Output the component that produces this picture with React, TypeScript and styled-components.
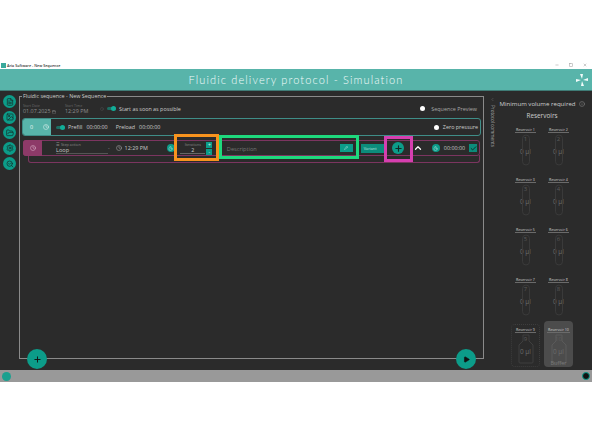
import React from 'react'
import styled, { createGlobalStyle } from 'styled-components'
import {
  Calendar,
  Check,
  ChevronLeft,
  ChevronUp,
  Clock,
  FileText,
  FolderOpen,
  Image,
  Info,
  Minus,
  Pencil,
  Play,
  Plus,
  SearchCheck,
  Settings,
  Square,
  Timer,
  X,
} from 'lucide-react'

const GlobalStyle = createGlobalStyle`
  html, body { margin: 0; padding: 0; background: #fff; }
  * { box-sizing: border-box; }
  body { font-family: "Open Sans", "Liberation Sans", sans-serif; }
`

const Page = styled.div`
  width: 592px;
  height: 444px;
  padding: 59px 0 62px;
  display: flex;
  flex-direction: column;
  overflow: hidden;
`
const TitleBar = styled.div`
  height: 10px;
  display: flex;
  align-items: center;
  padding: 2px 5px 0 1px;
  gap: 1px;
  color: #333;
  font-size: 3.7px;
  font-weight: 600;
`
const AppLogo = styled.div`
  width: 5px;
  height: 5px;
  background: #3aa99c;
`
const WindowButtons = styled.div`
  margin-left: auto;
  display: flex;
  gap: 10px;
  color: #666;
`
const Header = styled.header`
  height: 22px;
  background: #58b4aa;
  border-bottom: 1px solid #3f7c76;
  display: flex;
  align-items: center;
  justify-content: center;
  position: relative;
  color: #f2fbfa;
  font-family: Lato, sans-serif;
  font-weight: 300;
  font-size: 11px;
  letter-spacing: 1.13px;
`
const HeaderLogo = styled.svg`
  position: absolute;
  right: 3px;
  top: 4px;
`
const Body = styled.div`
  flex: 1;
  min-height: 0;
  display: flex;
  background: #2b2b2b;
`
const Rail = styled.nav`
  width: 19px;
  padding-top: 4px;
  display: flex;
  flex-direction: column;
  align-items: center;
  gap: 2.6px;
`
const RailButton = styled.div`
  width: 13px;
  height: 13px;
  border-radius: 50%;
  background: #0c9c89;
  color: #15302c;
  display: flex;
  align-items: center;
  justify-content: center;
`
const Panel = styled.fieldset`
  width: 465px;
  height: 267px;
  margin: 1px 0 0;
  padding: 0 2px 0 2px;
  border: 1.3px solid #8a8a8a;
  min-width: 0;
  position: relative;
  display: flex;
  flex-direction: column;
`
const Legend = styled.legend`
  margin-left: 0;
  padding: 0 1px;
  color: #cfcfcf;
  font-size: 5.4px;
  line-height: 8px;
`
const StartRow = styled.div`
  height: 17px;
  display: flex;
  align-items: center;
  padding: 0 4px 0 1px;
`
const Stamp = styled.div<{ $width: number }>`
  width: ${p => p.$width}px;
  display: flex;
  flex-direction: column;
  color: #8f8f8f;
  font-size: 5.4px;
  line-height: 6px;
  small {
    font-size: 3.6px;
    line-height: 4px;
    color: #6a6a6a;
  }
  svg { display: inline; vertical-align: -1px; margin-left: 1px; }
`
const Label = styled.span<{ $gap?: number; $color?: string }>`
  margin-left: ${p => p.$gap ?? 0}px;
  color: ${p => p.$color ?? '#cdcdcd'};
  font-size: 5.4px;
  white-space: nowrap;
`
const Toggle = styled.div<{ $gap?: number }>`
  margin-left: ${p => p.$gap ?? 0}px;
  width: 9px;
  height: 3px;
  border-radius: 2px;
  background: #1c6e63;
  position: relative;
  flex: none;
  &::after {
    content: '';
    position: absolute;
    right: 0;
    top: -1px;
    width: 5px;
    height: 5px;
    border-radius: 50%;
    background: #12ad98;
  }
`
const Dot = styled.div`
  width: 5px;
  height: 5px;
  border-radius: 50%;
  background: #fff;
  margin-left: auto;
  flex: none;
`
const PrefillRow = styled.div`
  height: 18px;
  margin-top: 1px;
  border: 1px solid #3f8e88;
  border-radius: 3px;
  display: flex;
  align-items: center;
  padding-right: 2px;
`
const PrefillTag = styled.div`
  width: 28px;
  height: 100%;
  background: #58b4aa;
  border-radius: 2px 0 0 2px;
  display: flex;
  align-items: center;
  justify-content: space-between;
  padding: 0 2px 0 7px;
  color: #eaf7f5;
  font-size: 5.4px;
`
const StepGroup = styled.div`
  margin: 4px 1px 0 1px;
  position: relative;
`
const StepRow = styled.div`
  height: 16px;
  border: 1px solid #7c3560;
  border-radius: 3px;
  display: flex;
  align-items: center;
  position: relative;
`
const StepTail = styled.div`
  height: 8px;
  margin: -1px 0 0 5px;
  border: 1px solid #7c3560;
  border-top: 0;
  border-radius: 0 0 3px 3px;
`
const StepTag = styled.div`
  width: 19px;
  height: 16px;
  margin: -1px 0 -1px -1px;
  background: #8d3a68;
  border-radius: 3px 0 0 3px;
  display: flex;
  align-items: center;
  justify-content: center;
  color: #e3bdd2;
`
const ActionField = styled.div`
  margin-left: 14px;
  width: 52px;
  border-bottom: 1px solid #555;
  display: flex;
  flex-direction: column;
  color: #c8c8c8;
  font-size: 5.6px;
  line-height: 6px;
  small {
    font-size: 3.8px;
    line-height: 4px;
    color: #8a8a8a;
  }
`
const Dash = styled.span`
  color: #999;
  font-size: 5px;
`
const IconSlot = styled.span<{ $gap?: number }>`
  margin-left: ${p => p.$gap ?? 0}px;
  display: flex;
  color: #aaa;
  flex: none;
`
const TealCircle = styled.div<{ $gap?: number; $size?: number }>`
  margin-left: ${p => p.$gap ?? 0}px;
  width: ${p => p.$size ?? 8}px;
  height: ${p => p.$size ?? 8}px;
  border-radius: 50%;
  background: #0c9c89;
  color: #cdeee9;
  display: flex;
  align-items: center;
  justify-content: center;
  flex: none;
`
const Annotated = styled.div<{ $gap?: number; $width: number }>`
  margin-left: ${p => p.$gap ?? 0}px;
  width: ${p => p.$width}px;
  flex: none;
  position: relative;
  display: flex;
  align-items: center;
  justify-content: center;
`
const Highlight = styled.div<{ $color: string; $top: number; $bottom: number }>`
  position: absolute;
  top: ${p => p.$top}px;
  bottom: ${p => p.$bottom}px;
  left: 0;
  right: 0;
  border: 3.5px solid ${p => p.$color};
  pointer-events: none;
`
const IterationsBody = styled.div`
  width: 32px;
  height: 14px;
  display: flex;
  align-items: center;
  gap: 1px;
`
const IterationsField = styled.div`
  flex: 1;
  border-bottom: 1px solid #666;
  text-align: center;
  color: #d0d0d0;
  font-size: 5.4px;
  line-height: 6px;
  small {
    display: block;
    font-size: 3.6px;
    line-height: 5px;
    color: #8a8a8a;
  }
`
const Stepper = styled.div`
  display: flex;
  flex-direction: column;
  gap: 1px;
`
const StepperButton = styled.div`
  width: 6px;
  height: 6px;
  background: #0c9c89;
  color: #d8f3ef;
  font-size: 5px;
  line-height: 6px;
  text-align: center;
`
const DescriptionBody = styled.div`
  width: 100%;
  padding: 1px 6px 0 8px;
  display: flex;
  align-items: center;
  justify-content: space-between;
  color: #767676;
  font-size: 5.6px;
`
const EditButton = styled.div`
  width: 13px;
  height: 8px;
  margin-top: -1px;
  background: #0c9c89;
  color: #e6f8f5;
  display: flex;
  align-items: center;
  justify-content: center;
`
const VariantButton = styled.div`
  margin-left: 2px;
  width: 23px;
  height: 9px;
  background: #0c8c7b;
  color: #bfe6e0;
  font-size: 3.8px;
  line-height: 9px;
  padding-left: 3px;
  flex: none;
`
const Time = styled.span<{ $gap?: number }>`
  margin-left: ${p => p.$gap ?? 0}px;
  color: #c8c8c8;
  font-size: 5.4px;
`
const CheckBox = styled.div`
  margin-left: 4px;
  width: 8px;
  height: 8px;
  background: #0c8c7b;
  color: #0d2a26;
  display: flex;
  align-items: center;
  justify-content: center;
  flex: none;
`
const FabRow = styled.div`
  position: absolute;
  left: 7px;
  right: 7px;
  bottom: -11px;
  display: flex;
  justify-content: space-between;
`
const Fab = styled.div`
  width: 20px;
  height: 20px;
  border-radius: 50%;
  background: #0c9c89;
  color: #111;
  display: flex;
  align-items: center;
  justify-content: center;
`
const CommentsTab = styled.aside`
  width: 14px;
  padding: 6px 0 0 3px;
  display: flex;
  flex-direction: column;
  align-items: center;
  color: #777;
  gap: 3px;
`
const VerticalText = styled.span`
  writing-mode: vertical-rl;
  color: #aaa;
  font-size: 4.6px;
  white-space: nowrap;
`
const Reservoirs = styled.aside`
  flex: 1;
  padding: 8px 6px 0 0;
  display: flex;
  flex-direction: column;
  align-items: center;
`
const MinTitle = styled.div`
  display: flex;
  align-items: center;
  gap: 3px;
  white-space: nowrap;
  color: #cdcdcd;
  font-size: 6.1px;
  line-height: 9px;
  svg { color: #888; flex: none; }
`
const ReservoirsTitle = styled.div`
  margin-top: 3px;
  color: #cdcdcd;
  font-size: 6.4px;
  line-height: 9px;
`
const ReservoirGrid = styled.div`
  margin-top: 6px;
  display: grid;
  grid-template-columns: 33px 33px;
  grid-auto-rows: 50px;
`
const Reservoir = styled.div<{ $kind: 'plain' | 'dashed' | 'selected' }>`
  height: ${p => (p.$kind === 'plain' ? 48 : p.$kind === 'dashed' ? 43 : 46)}px;
  margin: ${p => (p.$kind === 'plain' ? 0 : p.$kind === 'dashed' ? -2 : -5)}px 2px 0;
  padding-top: ${p => (p.$kind === 'plain' ? 0 : p.$kind === 'dashed' ? 2 : 5)}px;
  display: flex;
  flex-direction: column;
  align-items: center;
  position: relative;
  border-radius: 4px;
  background: ${p => (p.$kind === 'selected' ? '#4c4c4c' : 'transparent')};
  border: ${p => (p.$kind === 'dashed' ? '1px dotted #3d3d3d' : '1px solid transparent')};
`
const ReservoirName = styled.div`
  color: #d0d0d0;
  font-size: 3.6px;
  line-height: 5px;
  padding: 0 1px;
  border-bottom: 1px solid #6a6a6a;
  white-space: nowrap;
`
const Vessel = styled.div`
  flex: 1;
  width: 100%;
  position: relative;
  display: flex;
  flex-direction: column;
  align-items: center;
  padding-top: 2px;
  color: #5c5c5c;
  font-size: 6px;
  line-height: 8px;
`
const VesselShape = styled.svg`
  position: absolute;
  top: 1px;
  left: 50%;
  transform: translateX(-50%);
`
const Volume = styled.span`
  margin-top: 5px;
  color: #6c6c6c;
  font-size: 6.4px;
`
const Buffer = styled.span`
  position: absolute;
  bottom: -1px;
  color: #777;
  font-size: 5.6px;
`
const Footer = styled.footer`
  height: 12px;
  background: #999;
  display: flex;
  align-items: center;
  justify-content: space-between;
  padding: 0 2px;
`
const StatusLeft = styled.div`
  width: 9px;
  height: 9px;
  border-radius: 50%;
  background: #1aa08f;
`
const StatusRight = styled.div`
  width: 8px;
  height: 8px;
  border-radius: 50%;
  background: #111;
  border: 1.5px solid #0c9c89;
`

const railIcons = [FileText, Image, FolderOpen, Settings, SearchCheck]

const reservoirs = [1, 2, 3, 4, 5, 6, 7, 8, 9, 10]

const App: React.FC = () => {
  return (
    <Page>
      <GlobalStyle />
      <TitleBar>
        <AppLogo />
        Aria Software - New Sequence
        <WindowButtons>
          <Minus size={4} />
          <Square size={4} />
          <X size={4} />
        </WindowButtons>
      </TitleBar>
      <Header>
        Fluidic delivery protocol - Simulation
        <HeaderLogo width="14" height="14" viewBox="0 0 14 14" fill="#f2fbfa">
          <path d="M7 6 L5 1 L8 1 Z M8 7 L13 5 L13 8 Z M7 8 L9 13 L6 13 Z M6 7 L1 9 L1 6 Z" />
        </HeaderLogo>
      </Header>
      <Body>
        <Rail>
          {railIcons.map((Icon, i) => (
            <RailButton key={i}>
              <Icon size={8} strokeWidth={2.2} />
            </RailButton>
          ))}
        </Rail>
        <div>
          <Panel>
            <Legend>Fluidic sequence - New Sequence</Legend>
            <StartRow>
              <Stamp $width={42}>
                <small>Start Date</small>
                <span>
                  01.07.2025
                  <Calendar size={4} />
                </span>
              </Stamp>
              <Stamp $width={35}>
                <small>Start Time</small>
                <span>12:29 PM</span>
              </Stamp>
              <IconSlot>
                <Clock size={4} color="#555" />
              </IconSlot>
              <Toggle $gap={3} />
              <Label $gap={3}>Start as soon as possible</Label>
              <Dot />
              <Label $gap={6} $color="#a8a8a8">
                Sequence Preview
              </Label>
            </StartRow>
            <PrefillRow>
              <PrefillTag>
                0
                <Clock size={6} />
              </PrefillTag>
              <Toggle $gap={5} />
              <Label $gap={3}>Prefill</Label>
              <Label $gap={4}>00:00:00</Label>
              <Label $gap={8}>Preload</Label>
              <Label $gap={4}>00:00:00</Label>
              <Dot />
              <Label $gap={4}>Zero pressure</Label>
            </PrefillRow>
            <StepGroup>
              <StepRow>
                <StepTag>
                  <Clock size={6} />
                </StepTag>
                <ActionField>
                  <small>☰ Step action</small>
                  Loop
                </ActionField>
                <Dash>-</Dash>
                <IconSlot $gap={6}>
                  <Clock size={6} />
                </IconSlot>
                <Time $gap={3}>12:29 PM</Time>
                <TealCircle $gap={19}>
                  <Timer size={5} />
                </TealCircle>
                <Annotated $gap={-1} $width={45}>
                  <IterationsBody>
                    <IterationsField>
                      <small>Iterations</small>2
                    </IterationsField>
                    <Stepper>
                      <StepperButton>+</StepperButton>
                      <StepperButton>-</StepperButton>
                    </Stepper>
                  </IterationsBody>
                  <Highlight $color="#f7931e" $top={-7} $bottom={-6} />
                </Annotated>
                <Annotated $width={140}>
                  <DescriptionBody>
                    Description
                    <EditButton>
                      <Pencil size={4} />
                    </EditButton>
                  </DescriptionBody>
                  <Highlight $color="#1ed97d" $top={-9} $bottom={-6} />
                </Annotated>
                <VariantButton>Variant</VariantButton>
                <Annotated $width={29}>
                  <TealCircle $size={12}>
                    <Plus size={9} color="#0f2a27" strokeWidth={3} />
                  </TealCircle>
                  <Highlight $color="#d63fb0" $top={-6} $bottom={-8} />
                </Annotated>
                <IconSlot>
                  <ChevronUp size={10} color="#fff" strokeWidth={3} />
                </IconSlot>
                <TealCircle $gap={9}>
                  <Timer size={5} />
                </TealCircle>
                <Time $gap={4}>00:00:00</Time>
                <CheckBox>
                  <Check size={7} strokeWidth={3} />
                </CheckBox>
              </StepRow>
              <StepTail />
            </StepGroup>
            <FabRow>
              <Fab>
                <Plus size={9} strokeWidth={2.5} />
              </Fab>
              <Fab>
                <Play size={7} fill="#111" />
              </Fab>
            </FabRow>
          </Panel>
        </div>
        <CommentsTab>
          <ChevronLeft size={5} />
          <VerticalText>Protocol comments</VerticalText>
        </CommentsTab>
        <Reservoirs>
          <MinTitle>
            Minimum volume required
            <Info size={6} />
          </MinTitle>
          <ReservoirsTitle>Reservoirs</ReservoirsTitle>
          <ReservoirGrid>
            {reservoirs.map(n => (
              <Reservoir key={n} $kind={n === 9 ? 'dashed' : n === 10 ? 'selected' : 'plain'}>
                <ReservoirName>Reservoir {n}</ReservoirName>
                <Vessel>
                  {n < 9 ? (
                    <VesselShape width="8" height="32" viewBox="0 0 8 32" fill="none" stroke="#3a3a3a">
                      <rect x="0.5" y="1" width="7" height="30" rx="3.5" />
                    </VesselShape>
                  ) : (
                    <VesselShape width="16" height="30" viewBox="0 0 16 30" fill="none" stroke={n === 9 ? '#3f3f3f' : '#5a5a5a'}>
                      <path d="M5 1 H11 V7 L15 11 V28 Q15 29 14 29 H2 Q1 29 1 28 V11 L5 7 Z" />
                    </VesselShape>
                  )}
                  {n}
                  <Volume>0 µl</Volume>
                  {n === 10 && <Buffer>Buffer</Buffer>}
                </Vessel>
              </Reservoir>
            ))}
          </ReservoirGrid>
        </Reservoirs>
      </Body>
      <Footer>
        <StatusLeft />
        <StatusRight />
      </Footer>
    </Page>
  )
}

export default App
